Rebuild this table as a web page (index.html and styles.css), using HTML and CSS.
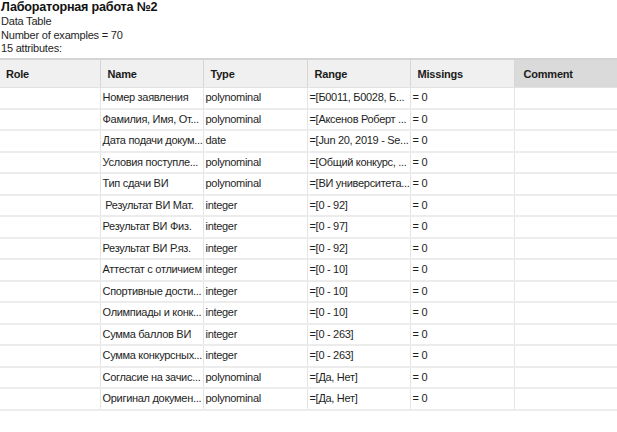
FILE: index.html
```html
<!DOCTYPE html>
<html>
<head>
<meta charset="utf-8">
<link rel="stylesheet" href="styles.css">
</head>
<body>
<div class="info">
  <div class="title">Лабораторная работа №2</div>
  <div class="meta">Data Table</div>
  <div class="meta">Number of examples = 70</div>
  <div class="meta">15 attributes:</div>
</div>
<table class="attrs">
  <colgroup>
    <col class="c-role"><col class="c-name"><col class="c-type"><col class="c-range"><col class="c-miss"><col class="c-comm">
  </colgroup>
  <thead>
    <tr>
      <th>Role</th><th>Name</th><th>Type</th><th>Range</th><th>Missings</th><th class="sorted">Comment</th>
    </tr>
  </thead>
  <tbody>
    <tr><td></td><td>Номер заявления</td><td>polynominal</td><td>=[Б0011, Б0028, Б...</td><td>= 0</td><td></td></tr>
    <tr><td></td><td>Фамилия, Имя, От...</td><td>polynominal</td><td>=[Аксенов Роберт ...</td><td>= 0</td><td></td></tr>
    <tr><td></td><td>Дата подачи докум...</td><td>date</td><td>=[Jun 20, 2019 - Se...</td><td>= 0</td><td></td></tr>
    <tr><td></td><td>Условия поступле...</td><td>polynominal</td><td>=[Общий конкурс, ...</td><td>= 0</td><td></td></tr>
    <tr><td></td><td>Тип сдачи ВИ</td><td>polynominal</td><td>=[ВИ университета...</td><td>= 0</td><td></td></tr>
    <tr><td></td><td>&nbsp;Результат ВИ Мат.</td><td>integer</td><td>=[0 - 92]</td><td>= 0</td><td></td></tr>
    <tr><td></td><td>Результат ВИ Физ.</td><td>integer</td><td>=[0 - 97]</td><td>= 0</td><td></td></tr>
    <tr><td></td><td>Результат ВИ Р.яз.</td><td>integer</td><td>=[0 - 92]</td><td>= 0</td><td></td></tr>
    <tr><td></td><td>Аттестат с отличием</td><td>integer</td><td>=[0 - 10]</td><td>= 0</td><td></td></tr>
    <tr><td></td><td>Спортивные дости...</td><td>integer</td><td>=[0 - 10]</td><td>= 0</td><td></td></tr>
    <tr><td></td><td>Олимпиады и конк...</td><td>integer</td><td>=[0 - 10]</td><td>= 0</td><td></td></tr>
    <tr><td></td><td>Сумма баллов ВИ</td><td>integer</td><td>=[0 - 263]</td><td>= 0</td><td></td></tr>
    <tr><td></td><td>Сумма конкурсных...</td><td>integer</td><td>=[0 - 263]</td><td>= 0</td><td></td></tr>
    <tr><td></td><td>Согласие на зачис...</td><td>polynominal</td><td>=[Да, Нет]</td><td>= 0</td><td></td></tr>
    <tr><td></td><td>Оригинал докумен...</td><td>polynominal</td><td>=[Да, Нет]</td><td>= 0</td><td></td></tr>
  </tbody>
</table>
</body>
</html>
```

FILE: styles.css
```css
html, body {
  margin: 0;
  padding: 0;
  background: #ffffff;
}
body {
  font-family: "Liberation Sans", Arial, sans-serif;
  color: #1e1e1e;
  font-size: 11px;
  letter-spacing: -0.2px;
}
.info {
  padding-left: 1px;
}
.title {
  font-size: 12.6px;
  font-weight: bold;
  line-height: 15px;
  letter-spacing: -0.2px;
  color: #111;
}
.meta {
  line-height: 13.5px;
  font-size: 11px;
}
.attrs {
  margin-top: 2.5px;
  width: 617px;
  border-collapse: collapse;
  table-layout: fixed;
}
.c-role { width: 100px; }
.c-name { width: 103px; }
.c-type { width: 104px; }
.c-range { width: 103px; }
.c-miss { width: 104px; }
.c-comm { width: 103px; }
.attrs th {
  height: 27px;
  padding: 0 0 0 7px;
  text-align: left;
  font-weight: bold;
  font-size: 11px;
  color: #1a1a1a;
  background: #f0f0f0;
  border-top: 2px solid #d4d4d4;
  border-right: 1px solid #d6d6d6;
  border-bottom: 1px solid #e2e2e2;
}
.attrs th:first-child {
  padding-left: 6px;
}
.attrs th.sorted {
  background: #dadada;
  padding-left: 9px;
  border-right: none;
}
.attrs td {
  height: 19.5px;
  padding: 0 0 0 2px;
  white-space: nowrap;
  overflow: hidden;
  border-bottom: 2px solid #ececec;
  border-right: 1px solid #e4e4e4;
  line-height: 19.5px;
  letter-spacing: -0.3px;
}
.attrs td:last-child {
  border-right: none;
}
```
